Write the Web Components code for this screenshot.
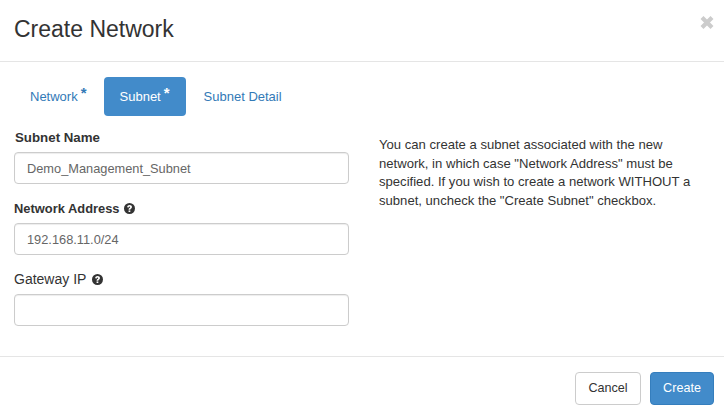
<!DOCTYPE html>
<html><head><meta charset="utf-8"><style>
html,body{margin:0;padding:0;background:#fff}
body{font-family:"Liberation Sans",Arial,sans-serif;color:#333;font-size:12px}
</style></head><body>
<net-modal>
  <modal-header slot="header" title-text="Create Network"></modal-header>
  <tab-nav slot="tabs">
    <tab-pill required>Network</tab-pill>
    <tab-pill active required>Subnet</tab-pill>
    <tab-pill>Subnet Detail</tab-pill>
  </tab-nav>
  <form-field slot="fields" label="Subnet Name" value="Demo_Management_Subnet" wide></form-field>
  <form-field slot="fields" label="Network Address" value="192.168.11.0/24" help></form-field>
  <form-field slot="fields" label="Gateway IP" value="" help thin></form-field>
  <span slot="help">You can create a subnet associated with the new network, in which case "Network Address" must be specified. If you wish to create a network WITHOUT a subnet, uncheck the "Create Subnet" checkbox.</span>
  <ui-button slot="footer">Cancel</ui-button>
  <ui-button slot="footer" primary>Create</ui-button>
</net-modal>
<script>
function def(name, css, html){
  customElements.define(name, class extends HTMLElement{
    constructor(){super();const r=this.attachShadow({mode:'open'});
      r.innerHTML='<style>'+css+'</style>'+(typeof html==='function'?'':html);
      this._h=html;this._c=css;}
    connectedCallback(){
      if(typeof this._h==='function') this.shadowRoot.innerHTML='<style>'+this._c+'</style>'+this._h(this);
    }
  });
}
def('net-modal',`
:host{display:block;width:724px;height:416px;overflow:hidden;background:#fff;box-sizing:border-box}
.hd{border-bottom:1px solid #e5e5e5;height:62px;box-sizing:border-box}
.bd{height:295px;box-sizing:border-box;padding:15px 15px 0 14px;border-bottom:1px solid #e5e5e5}
.cols{display:grid;grid-template-columns:335px 1fr;column-gap:30px}
.ft{display:flex;justify-content:flex-end;gap:9px;padding:15px 10px 0 0}
.tabs{display:block;margin-bottom:13px}
`,`<div class="hd"><slot name="header"></slot></div>
<div class="bd"><div class="tabs"><slot name="tabs"></slot></div>
<div class="cols"><div><slot name="fields"></slot></div><help-note><slot name="help"></slot></help-note></div></div>
<div class="ft"><slot name="footer"></slot></div>`);
def('modal-header',`
:host{display:flex;justify-content:space-between;align-items:flex-start;height:61px}
h4{margin:0;padding:15px 0 0 14px;font:400 23px/28px "Liberation Sans",Arial,sans-serif;color:#333}
svg{display:block;margin:15px 9px 0 0}
`,h=>`<h4>${h.getAttribute('title-text')}</h4><svg width="16" height="15" viewBox="0 0 16 15"><path d="M3 2.5 13 12.5M13 2.5 3 12.5" stroke="#ccc" stroke-width="4.2" stroke-linecap="butt" fill="none"/></svg>`);
def('tab-nav',`:host{display:flex;gap:2px;height:39px}`,`<slot></slot>`);
def('tab-pill',`
:host{display:block;height:39px;box-sizing:border-box;padding:12px 15px 0 16px;border-radius:4px;color:#337ab7;font-size:13px;line-height:15px;white-space:nowrap}
:host([active]){background:#428bca;color:#fff;padding-right:16px}
.s{display:inline-block;vertical-align:top;height:8px;margin-left:3px;font:700 15px/14px "Liberation Sans",sans-serif;position:relative;top:-3px}
`,h=>`<slot></slot>${h.hasAttribute('required')?'<span class="s">*</span>':''}`);
def('form-field',`
:host{display:block;height:71px}
label{display:flex;align-items:center;gap:4px;height:17px;font:700 12.9px/17px "Liberation Sans",Arial,sans-serif;color:#333;margin-bottom:6px}
:host([wide]) label{font-size:13.3px;padding-left:1px}
:host([thin]) label{font:400 14px/17px "Liberation Sans",Arial,sans-serif;gap:6px}
.b{box-sizing:border-box;height:32px;width:335px;border:1px solid #ccc;border-radius:4px;box-shadow:inset 0 1px 1px rgba(0,0,0,.075);padding:0 12px;font:12.8px/32px "Liberation Sans",Arial,sans-serif;color:#666;background:#fff}
svg{display:block}
`,h=>`<label>${h.getAttribute('label')}${h.hasAttribute('help')?'<svg width="11" height="11" viewBox="0 0 12 12"><circle cx="6" cy="6" r="6" fill="#333"/><path d="M3.4 4.7C3.5 3 4.7 2.2 6.1 2.2c1.6 0 2.6 1 2.6 2.2 0 1-.6 1.5-1.2 1.9-.5.3-.6.5-.6 1H5c0-1 .3-1.5 1-1.9.5-.3.7-.5.7-.9 0-.4-.3-.6-.7-.6-.5 0-.7.3-.8.9Z" fill="#fff"/><rect x="5" y="8.1" width="1.9" height="1.7" fill="#fff"/></svg>':''}</label><div class="b">${h.getAttribute('value')}</div>`);
def('help-note',`:host{display:block;padding-top:7px;font:13.1px/18.5px "Liberation Sans",Arial,sans-serif;color:#333;width:320px}`,`<slot></slot>`);
def('ui-button',`
:host{display:block;box-sizing:border-box;height:33px;padding:0 12.4px;border:1px solid #ccc;border-radius:4px;background:#fff;color:#333;font:12.6px/31px "Liberation Sans",Arial,sans-serif}
:host([primary]){background:#428bca;border-color:#357ebd;color:#fff;padding:0 12.1px}
`,`<slot></slot>`);
</script>
</body></html>
